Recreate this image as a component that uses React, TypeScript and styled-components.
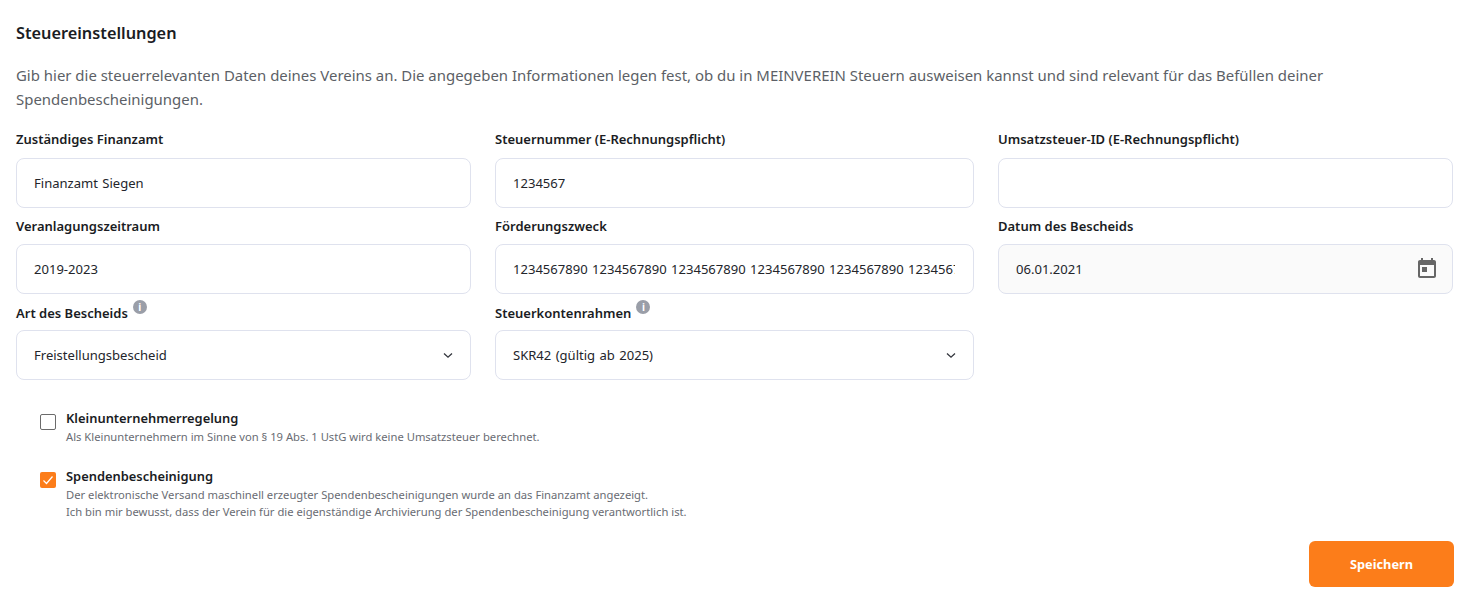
import React from "react";
import styled, { createGlobalStyle } from "styled-components";

const GlobalStyle = createGlobalStyle`
  html, body {
    margin: 0;
    padding: 0;
    background: #fff;
    font-family: "Noto Sans", "Open Sans", sans-serif;
    color: #1a1c23;
  }
`;

const Page = styled.div`
  width: 1482px;
  height: 605px;
  box-sizing: border-box;
  padding: 22px 28px 0 16px;
  overflow: hidden;
`;

const Title = styled.h2`
  margin: 0 0 19px;
  font-size: 16.3px;
  line-height: 22px;
  font-weight: 600;
`;

const Intro = styled.p`
  margin: 0 0 11px;
  font-size: 14.95px;
  line-height: 24px;
  color: #5c5f66;
  width: 1340px;
`;

const FormGrid = styled.div`
  display: grid;
  grid-template-columns: 455px 479px 455px;
  grid-auto-rows: 86px;
  column-gap: 24px;
  width: 1437px;
`;

const Field = styled.div`
  display: flex;
  flex-direction: column;
  justify-content: flex-end;
`;

const Label = styled.label<{ $top?: number }>`
  display: flex;
  align-items: flex-start;
  gap: 5px;
  height: 36px;
  padding-top: ${(p) => p.$top ?? 7}px;
  box-sizing: border-box;
  font-size: 13px;
  line-height: 20px;
  font-weight: 600;
  white-space: nowrap;
`;

const InfoDot = styled.span`
  width: 14px;
  height: 14px;
  margin-top: -3px;
  border-radius: 50%;
  background: #9a9ea8;
  color: #fff;
  font-size: 10px;
  line-height: 14px;
  font-weight: 700;
  text-align: center;
`;

const Control = styled.div<{ $disabled?: boolean }>`
  display: flex;
  align-items: center;
  justify-content: space-between;
  height: 50px;
  box-sizing: border-box;
  padding: 0 18px 0 17px;
  border: 1px solid #dfe2ee;
  border-radius: 8px;
  background: ${(p) => (p.$disabled ? "#fafafa" : "#fff")};
  font-size: 13.05px;
  word-spacing: 1px;
  color: #23252b;
  overflow: hidden;
`;

const ControlText = styled.span`
  white-space: nowrap;
  overflow: hidden;
`;

const CheckList = styled.div`
  display: flex;
  flex-direction: column;
  gap: 21px;
  margin-top: 28px;
`;

const CheckRow = styled.div`
  display: flex;
  gap: 10px;
  padding-left: 24px;
`;

const Box = styled.span<{ $checked?: boolean }>`
  flex: none;
  display: flex;
  align-items: center;
  justify-content: center;
  width: 16px;
  height: 16px;
  margin-top: 6px;
  box-sizing: border-box;
  border-radius: 2px;
  border: ${(p) => (p.$checked ? "none" : "1px solid #6b6b6b")};
  background: ${(p) => (p.$checked ? "#fc7d1a" : "#fff")};
`;

const CheckTitle = styled.div`
  font-size: 12.9px;
  line-height: 20px;
  font-weight: 600;
`;

const CheckHint = styled.div`
  font-size: 11.23px;
  line-height: 17px;
  color: #696c73;
`;

const Footer = styled.div`
  display: flex;
  justify-content: flex-end;
  width: 1438px;
  margin-top: 21px;
`;

const SaveButton = styled.button`
  width: 145px;
  height: 46px;
  border: none;
  border-radius: 6px;
  background: #fc7d1a;
  color: #fff;
  font-family: inherit;
  font-size: 12.8px;
  font-weight: 700;
`;

const ChevronSvg = styled.svg`
  flex: none;
  margin-right: -2px;
`;

const CalendarSvg = styled.svg`
  flex: none;
  margin: -2px -5px 0 0;
`;

const Chevron = () => (
  <ChevronSvg width="12" height="12" viewBox="0 0 12 12" fill="none" stroke="#33363d" strokeWidth="1.3">
    <path d="M2 4.5 6 8.2 10 4.5" />
  </ChevronSvg>
);

const CalendarIcon = () => (
  <CalendarSvg width="24" height="24" viewBox="0 0 24 24" fill="#666">
    <path d="M19 4h-1V2h-2v2H8V2H6v2H5c-1.1 0-2 .9-2 2v14c0 1.1.9 2 2 2h14c1.1 0 2-.9 2-2V6c0-1.1-.9-2-2-2zm0 16H5V9h14v11zM7 11h5v5H7z" />
  </CalendarSvg>
);

const App = () => {
  return (
    <Page>
      <GlobalStyle />
      <Title>Steuereinstellungen</Title>
      <Intro>
        Gib hier die steuerrelevanten Daten deines Vereins an. Die angegeben Informationen legen fest, ob du in MEINVEREIN
        Steuern ausweisen kannst und sind relevant für das Befüllen deiner Spendenbescheinigungen.
      </Intro>
      <FormGrid>
        <Field>
          <Label>Zuständiges Finanzamt</Label>
          <Control><ControlText>Finanzamt Siegen</ControlText></Control>
        </Field>
        <Field>
          <Label>Steuernummer (E-Rechnungspflicht)</Label>
          <Control><ControlText>1234567</ControlText></Control>
        </Field>
        <Field>
          <Label>Umsatzsteuer-ID (E-Rechnungspflicht)</Label>
          <Control />
        </Field>
        <Field>
          <Label $top={8}>Veranlagungszeitraum</Label>
          <Control><ControlText>2019-2023</ControlText></Control>
        </Field>
        <Field>
          <Label $top={8}>Förderungszweck</Label>
          <Control>
            <ControlText>1234567890 1234567890 1234567890 1234567890 1234567890 1234567890 1234567890</ControlText>
          </Control>
        </Field>
        <Field>
          <Label $top={8}>Datum des Bescheids</Label>
          <Control $disabled>
            <ControlText>06.01.2021</ControlText>
            <CalendarIcon />
          </Control>
        </Field>
        <Field>
          <Label $top={9}>Art des Bescheids <InfoDot>i</InfoDot></Label>
          <Control>
            <ControlText>Freistellungsbescheid</ControlText>
            <Chevron />
          </Control>
        </Field>
        <Field>
          <Label $top={9}>Steuerkontenrahmen <InfoDot>i</InfoDot></Label>
          <Control>
            <ControlText>SKR42 (gültig ab 2025)</ControlText>
            <Chevron />
          </Control>
        </Field>
      </FormGrid>
      <CheckList>
        <CheckRow>
          <Box />
          <div>
            <CheckTitle>Kleinunternehmerregelung</CheckTitle>
            <CheckHint>Als Kleinunternehmern im Sinne von § 19 Abs. 1 UstG wird keine Umsatzsteuer berechnet.</CheckHint>
          </div>
        </CheckRow>
        <CheckRow>
          <Box $checked>
            <svg width="12" height="12" viewBox="0 0 12 12" fill="none" stroke="#fff" strokeWidth="1.2">
              <path d="M1.5 6.5 4.5 9.5 10.5 2.5" />
            </svg>
          </Box>
          <div>
            <CheckTitle>Spendenbescheinigung</CheckTitle>
            <CheckHint>
              Der elektronische Versand maschinell erzeugter Spendenbescheinigungen wurde an das Finanzamt angezeigt.
              <br />
              Ich bin mir bewusst, dass der Verein für die eigenständige Archivierung der Spendenbescheinigung verantwortlich ist.
            </CheckHint>
          </div>
        </CheckRow>
      </CheckList>
      <Footer>
        <SaveButton>Speichern</SaveButton>
      </Footer>
    </Page>
  );
};

export default App;
